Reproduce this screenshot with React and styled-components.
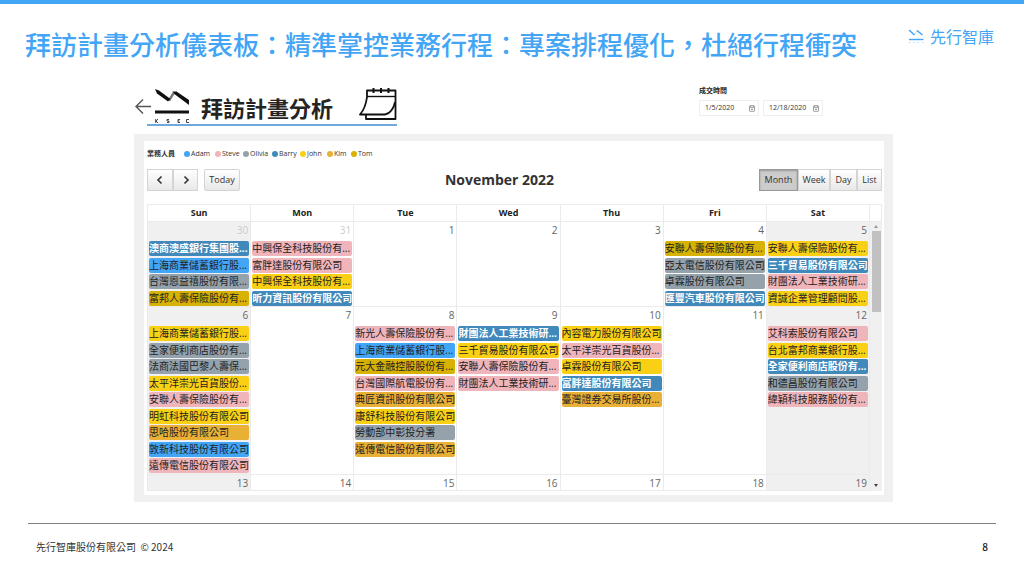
import React from "react";
import styled, { createGlobalStyle } from "styled-components";

const GlobalStyle = createGlobalStyle`
  * { box-sizing: border-box; }
  body {
    margin: 0;
    background: #fff;
    color: #333;
    font-family: "Open Sans", "Noto Sans CJK TC", sans-serif;
  }
  h1, h2, h3, p, ul, dl, fieldset { margin: 0; padding: 0; }
  ul { list-style: none; }
  button, input { font-family: inherit; margin: 0; }
`;

const COLORS = {
  adam: "#42a5f5",
  steve: "#f0b4bb",
  olivia: "#95a2ac",
  barry: "#4189ba",
  john: "#f9d014",
  kim: "#e9b036",
  tom: "#d7b104",
};

const Slide = styled.div`
  min-height: 100vh;
  display: flex;
  flex-direction: column;
  border-top: 4px solid #42a5f5;
`;

const SlideHeader = styled.header`
  display: flex;
  justify-content: space-between;
  align-items: flex-start;
  padding: 20px 30px 0 25px;
  height: 80px;
`;

const SlideTitle = styled.h1`
  font-size: 26px;
  line-height: 40px;
  font-weight: 500;
  color: #42a5f5;
  white-space: nowrap;
  font-family: "Noto Sans CJK TC", sans-serif;
`;

const Brand = styled.div`
  display: flex;
  align-items: center;
  gap: 6px;
  color: #42a5f5;
  font-family: "Noto Sans CJK TC", sans-serif;
  font-size: 16px;
  line-height: 24px;
  white-space: nowrap;
`;

const Report = styled.main`
  padding: 0 131px 0 134px;
`;

const ReportHeader = styled.div`
  display: flex;
  justify-content: space-between;
  align-items: flex-start;
  height: 50px;
  padding-right: 70px;
`;

const Heading = styled.div`
  display: flex;
  align-items: flex-start;
`;

const BackButton = styled.button`
  display: flex;
  border: 0;
  padding: 14px 0 0;
  width: 13px;
  background: none;

  svg {
    flex: none;
  }
`;

const HeadingLine = styled.div`
  display: flex;
  align-items: flex-start;
  gap: 12px;
  height: 42px;
  padding-left: 8px;
  border-bottom: 2px solid #6fa8dc;
`;

const Mark = styled.div`
  padding-top: 5px;
  height: 40px;
`;

const ReportTitle = styled.h2`
  font-family: "Noto Sans CJK TC", sans-serif;
  font-size: 22px;
  line-height: 32px;
  padding-top: 7px;
  margin-right: 14px;
  font-weight: 700;
  color: #252423;
`;

const CalendarHolder = styled.div`
  padding-top: 3px;
  height: 38px;
`;

const Filter = styled.fieldset`
  border: 0;
  min-width: 0;
`;

const FilterLegend = styled.legend`
  padding: 0;
  font-size: 7px;
  line-height: 14px;
  font-weight: 700;
  color: #252423;
`;

const DateRow = styled.div`
  display: flex;
  gap: 4px;
  padding-top: 2px;
`;

const DateBox = styled.label`
  display: flex;
  align-items: center;
  width: 60px;
  height: 16px;
  padding: 0 3px 0 5px;
  border: 1px solid #efefef;
`;

const DateInput = styled.input`
  flex: 1;
  min-width: 0;
  border: 0;
  padding: 0;
  background: none;
  font-size: 7px;
  line-height: 14px;
  color: #333;
`;

const Panel = styled.section`
  background: #f0f0f0;
  padding: 7px 9px 7px 10px;
`;

const Card = styled.div`
  background: #fff;
  padding: 7px 2px 4px 3px;
`;

const Legend = styled.dl`
  display: flex;
  align-items: center;
  height: 11px;
  font-size: 7px;
  line-height: 11px;
  color: #333;
`;

const LegendTitle = styled.dt`
  font-weight: 700;
  width: 37px;
`;

const LegendItem = styled.dd`
  margin: 0;
  display: flex;
  align-items: center;
  gap: 1px;
  width: ${(p) => p.$width}px;
`;

const Dot = styled.span`
  width: 6px;
  height: 6px;
  border-radius: 50%;
  background: ${(p) => p.$color};
`;

const Toolbar = styled.div`
  display: flex;
  justify-content: space-between;
  align-items: center;
  padding-top: 10px;
  height: 32px;
`;

const Controls = styled.div`
  display: flex;
  gap: 6px;
`;

const ButtonGroup = styled.div`
  display: flex;
`;

const ToolButton = styled.button`
  display: flex;
  align-items: center;
  justify-content: center;
  height: 22px;
  width: ${(p) => p.$width}px;
  padding: 0;
  border: 1px solid ${(p) => (p.$active ? "#999" : "#d4d4d4")};
  background: ${(p) => (p.$active ? "#ccc" : "linear-gradient(#fff, #e8e8e8)")};
  box-shadow: ${(p) => (p.$active ? "inset 0 1px 2px #999" : "none")};
  color: #333;
  font-size: 9px;
  line-height: 12px;
  border-radius: 2px;

  ${ButtonGroup} & {
    border-radius: 0;
  }
  ${ButtonGroup} & + & {
    border-left-width: 0;
  }
`;

const MonthTitle = styled.h3`
  font-size: 14px;
  line-height: 22px;
  font-weight: 700;
  color: #333;
`;

const CalendarFrame = styled.div`
  display: flex;
  margin-top: 13px;
`;

const Month = styled.table`
  flex: 1;
  width: 0;
  table-layout: fixed;
  border-collapse: collapse;
`;

const DayName = styled.th`
  height: 17px;
  padding: 0;
  border: 1px solid #ebebeb;
  font-size: 9px;
  line-height: 12px;
  font-weight: 700;
  color: #222;
`;

const DayCell = styled.td`
  padding: 0;
  height: ${(p) => p.$height}px;
  vertical-align: top;
  border: 1px solid #ebebeb;
  background: ${(p) => (p.$weekend ? "#f0f0f0" : "#fff")};
`;

const DayBody = styled.div`
  display: flex;
  flex-direction: column;
  height: ${(p) => p.$height - 1}px;
`;

const DayNumber = styled.span`
  flex: none;
  padding-right: 2px;
  text-align: right;
  font-size: 10px;
  line-height: 16px;
  color: ${(p) => (p.$muted ? "#ccc" : "#666")};
`;

const Events = styled.ul`
  flex: 1;
  display: grid;
  grid-template-rows: repeat(${(p) => p.$rows}, 1fr);
  margin: 3px 0 -1px;
  padding: 0 1px;
`;

const Event = styled.li`
  height: 15px;
  border-radius: 2px;
  white-space: nowrap;
  font-size: 10px;
  line-height: 15px;
  background: ${(p) => p.$color};
  color: ${(p) => (p.$light ? "#fff" : "#222")};
  font-weight: ${(p) => (p.$light ? 700 : 400)};
`;

const Gutter = styled.div`
  width: 12px;
  display: flex;
  flex-direction: column;
  align-items: center;
  background: #f0f0f0;
`;

const GutterHead = styled.div`
  align-self: stretch;
  height: 18px;
  background: #fff;
  border: 1px solid #ebebeb;
  border-left: 0;
`;

const Thumb = styled.div`
  width: 9px;
  height: 81px;
  margin: 1px 0 auto;
  background: #c1c1c1;
`;

const Footer = styled.footer`
  display: flex;
  justify-content: space-between;
  margin: 21px 28px 0;
  padding: 14px 8px 0;
  border-top: 1px solid #808080;
  font-size: 10px;
  line-height: 18px;
  color: #333;
  font-family: "Noto Sans CJK TC", sans-serif;
`;

const PageNumber = styled.span`
  font-weight: 500;
  color: #111;
`;

const people = [
  ["Adam", "adam", 31],
  ["Steve", "steve", 28],
  ["Olivia", "olivia", 29],
  ["Barry", "barry", 28],
  ["John", "john", 27],
  ["Kim", "kim", 24],
  ["Tom", "tom", 24],
];

const dayNames = ["Sun", "Mon", "Tue", "Wed", "Thu", "Fri", "Sat"];

const weeks = [
  {
    height: 85,
    rows: 4,
    days: [
      [30, [["澳商澳盛銀行集團股...", "barry"], ["上海商業儲蓄銀行股...", "adam"], ["台灣恩益禧股份有限...", "olivia"], ["富邦人壽保險股份有...", "tom"]]],
      [31, [["中興保全科技股份有...", "steve"], ["富胖達股份有限公司", "steve"], ["中興保全科技股份有...", "john"], ["昕力資訊股份有限公司", "barry"]]],
      [1, []],
      [2, []],
      [3, []],
      [4, [["安聯人壽保險股份有...", "tom"], ["亞太電信股份有限公司", "olivia"], ["卓霖股份有限公司", "olivia"], ["匯豐汽車股份有限公司", "barry"]]],
      [5, [["安聯人壽保險股份有...", "john"], ["三千貿易股份有限公司", "barry"], ["財團法人工業技術研...", "steve"], ["資誠企業管理顧問股...", "john"]]],
    ],
  },
  {
    height: 168,
    rows: 9,
    days: [
      [6, [["上海商業儲蓄銀行股...", "john"], ["全家便利商店股份有...", "olivia"], ["法商法國巴黎人壽保...", "olivia"], ["太平洋崇光百貨股份...", "john"], ["安聯人壽保險股份有...", "steve"], ["明虹科技股份有限公司", "john"], ["思哈股份有限公司", "kim"], ["敦新科技股份有限公司", "adam"], ["遠傳電信股份有限公司", "steve"]]],
      [7, []],
      [8, [["新光人壽保險股份有...", "steve"], ["上海商業儲蓄銀行股...", "adam"], ["元大金融控股股份有...", "tom"], ["台灣國際航電股份有...", "steve"], ["典匠資訊股份有限公司", "kim"], ["康舒科技股份有限公司", "john"], ["勞動部中彰投分署", "olivia"], ["遠傳電信股份有限公司", "kim"]]],
      [9, [["財團法人工業技術研...", "barry"], ["三千貿易股份有限公司", "john"], ["安聯人壽保險股份有...", "steve"], ["財團法人工業技術研...", "steve"]]],
      [10, [["內容電力股份有限公司", "john"], ["太平洋崇光百貨股份...", "steve"], ["卓霖股份有限公司", "john"], ["富胖達股份有限公司", "barry"], ["臺灣證券交易所股份...", "kim"]]],
      [11, []],
      [12, [["艾科索股份有限公司", "steve"], ["台北富邦商業銀行股...", "john"], ["全家便利商店股份有...", "barry"], ["和德昌股份有限公司", "olivia"], ["緯穎科技服務股份有...", "steve"]]],
    ],
  },
  {
    height: 16,
    rows: 1,
    days: [13, 14, 15, 16, 17, 18, 19].map((n) => [n, []]),
  },
];

const BrandIcon = () => (
  <svg width="16" height="15" viewBox="0 0 16 15" fill="none" stroke="currentColor" aria-hidden="true">
    <path d="M1 1l5.500 5M9 1.500l5.500 4.500" strokeWidth="1.600" />
    <path d="M6.500 6l2.500-4.500" strokeWidth="1" opacity=".3" />
    <path d="M1 10.500h14.500" strokeWidth="1.400" />
    <path d="M1 13.500h14.500" strokeWidth="1" strokeDasharray="1.500 2.800" opacity=".35" />
  </svg>
);

const ReportMark = () => (
  <svg width="34" height="34" viewBox="0 0 34 34" fill="none" aria-label="KSEC" role="img">
    <path d="M14 11.500l5-8" stroke="#777" strokeWidth="2.500" />
    <path d="M0 0l4 1.500L15.500 10l-2.500 2.500L2 4.500z" fill="#111" />
    <path d="M17.500 2.500h4L34 11v5L20 5.500z" fill="#111" />
    <path d="M0 23h34" stroke="#111" strokeWidth="3" />
    <path d="M.7 30v4M3 30l-2 2 2 2M14 30.500h-2v1.500h2v1.500h-2M25 30.500h-2v3h2M23 32h1.500M34 30.500h-2.500v3H34" stroke="#444" strokeWidth="1" />
  </svg>
);

const CalendarDrawing = () => (
  <svg width="38" height="34" viewBox="0 0 38 34" fill="none" stroke="#111" strokeWidth="1.800" strokeLinejoin="round" aria-hidden="true">
    <path d="M8 10V3.500h28.500V32H7v-4" />
    <path d="M8 9.500h28.500" strokeWidth="1.400" />
    <path d="M8 10c-1 8-3 13-7 17.500h25C31 27 35 21 36 15" />
    <path d="M14.500 1v5M22 1v5M29.500 1v5" strokeWidth="2" />
  </svg>
);

const DateIcon = () => (
  <svg width="6" height="7" viewBox="0 0 6 7" fill="none" stroke="#777" strokeWidth=".7" aria-hidden="true">
    <rect x=".5" y="1" width="5" height="5.300" rx=".5" />
    <path d="M.5 2.700h5M1.700 0v1.500M4.300 0v1.500M2 4.500h2" />
  </svg>
);

const Chevron = ({ d }) => (
  <svg width="10" height="10" viewBox="0 0 10 10" fill="none" stroke="#333" strokeWidth="1.600" aria-hidden="true">
    <path d={d} />
  </svg>
);

const ScrollArrow = ({ d, color }) => (
  <svg width="6" height="8" viewBox="0 0 6 8" fill={color} aria-hidden="true">
    <path d={d} />
  </svg>
);

export default function App() {
  return (
    <Slide>
      <GlobalStyle />
      <SlideHeader>
        <SlideTitle>拜訪計畫分析儀表板：精準掌控業務行程：專案排程優化，杜絕行程衝突</SlideTitle>
        <Brand>
          <BrandIcon />
          先行智庫
        </Brand>
      </SlideHeader>

      <Report>
        <ReportHeader>
          <Heading>
            <BackButton type="button" aria-label="Back">
              <svg width="17" height="17" viewBox="0 0 17 17" fill="none" stroke="#555" strokeWidth="1.400" aria-hidden="true">
                <path d="M17 8.500H2M9 1.500l-7 7 7 7" />
              </svg>
            </BackButton>
            <HeadingLine>
              <Mark><ReportMark /></Mark>
              <ReportTitle>拜訪計畫分析</ReportTitle>
              <CalendarHolder><CalendarDrawing /></CalendarHolder>
            </HeadingLine>
          </Heading>
          <Filter>
            <FilterLegend>成交時間</FilterLegend>
            <DateRow>
              <DateBox>
                <DateInput aria-label="Start date" defaultValue="1/5/2020" />
                <DateIcon />
              </DateBox>
              <DateBox>
                <DateInput aria-label="End date" defaultValue="12/18/2020" />
                <DateIcon />
              </DateBox>
            </DateRow>
          </Filter>
        </ReportHeader>

        <Panel>
          <Card>
            <Legend>
              <LegendTitle>業務人員</LegendTitle>
              {people.map(([name, key, width]) => (
                <LegendItem key={key} $width={width}>
                  <Dot $color={COLORS[key]} />
                  {name}
                </LegendItem>
              ))}
            </Legend>
            <Toolbar>
              <Controls>
                <ButtonGroup>
                  <ToolButton type="button" $width={26} aria-label="Previous"><Chevron d="M6.500 1.500L3 5l3.500 3.500" /></ToolButton>
                  <ToolButton type="button" $width={25} aria-label="Next"><Chevron d="M3.500 1.500L7 5 3.500 8.500" /></ToolButton>
                </ButtonGroup>
                <ToolButton type="button" $width={36}>Today</ToolButton>
              </Controls>
              <MonthTitle>November 2022</MonthTitle>
              <ButtonGroup>
                <ToolButton type="button" $width={39} $active>Month</ToolButton>
                <ToolButton type="button" $width={32}>Week</ToolButton>
                <ToolButton type="button" $width={27}>Day</ToolButton>
                <ToolButton type="button" $width={25}>List</ToolButton>
              </ButtonGroup>
            </Toolbar>
            <CalendarFrame>
              <Month>
                <thead>
                  <tr>
                    {dayNames.map((d) => <DayName key={d} scope="col">{d}</DayName>)}
                  </tr>
                </thead>
                <tbody>
                  {weeks.map((week) => (
                    <tr key={week.days[0][0]}>
                      {week.days.map(([n, events], i) => (
                        <DayCell key={n} $height={week.height} $weekend={i === 0 || i === 6}>
                          <DayBody $height={week.height}>
                            <DayNumber $muted={n > 29}>{n}</DayNumber>
                            {events.length > 0 && (
                              <Events $rows={week.rows}>
                                {events.map(([text, who]) => (
                                  <Event key={text + who} $color={COLORS[who]} $light={who === "barry"}>{text}</Event>
                                ))}
                              </Events>
                            )}
                          </DayBody>
                        </DayCell>
                      ))}
                    </tr>
                  ))}
                </tbody>
              </Month>
              <Gutter>
                <GutterHead />
                <ScrollArrow d="M1 6l2-3 2 3z" color="#999" />
                <Thumb />
                <ScrollArrow d="M1 1h4L3 4z" color="#444" />
              </Gutter>
            </CalendarFrame>
          </Card>
        </Panel>
      </Report>

      <Footer>
        <span>先行智庫股份有限公司&nbsp; © 2024</span>
        <PageNumber>8</PageNumber>
      </Footer>
    </Slide>
  );
}
